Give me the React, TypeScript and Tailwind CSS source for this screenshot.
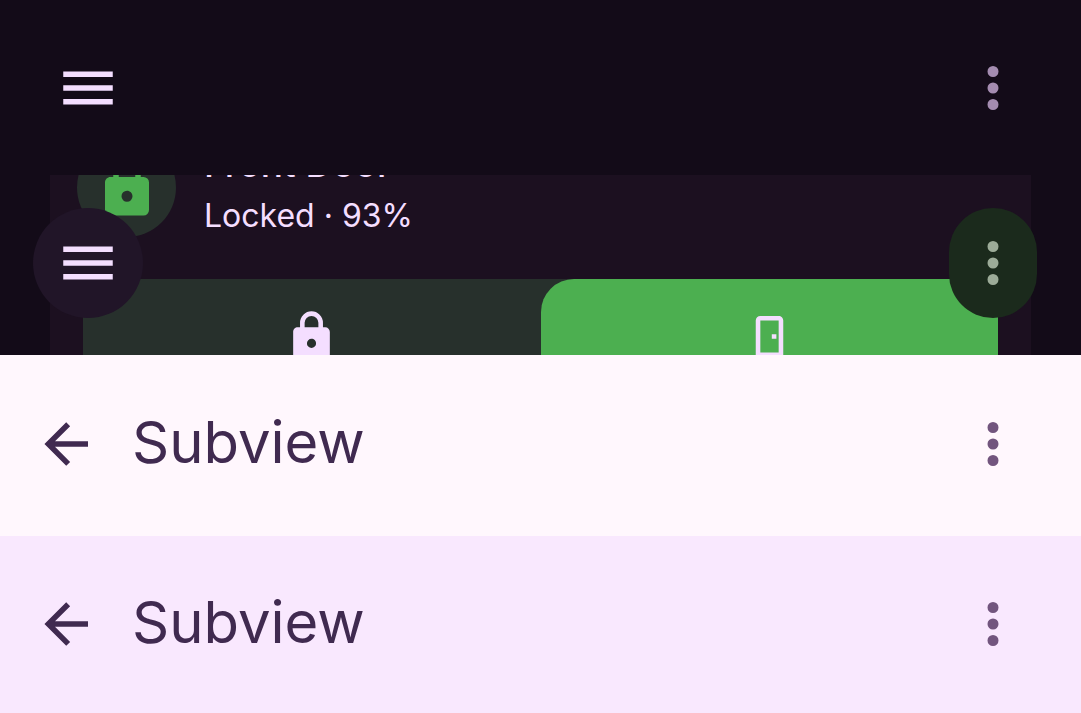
import type { ReactNode } from "react";

const icons = {
  menu: "M3,6H21V8H3V6M3,11H21V13H3V11M3,16H21V18H3V16Z",
  dots: "M12,16A2,2 0 0,1 14,18A2,2 0 0,1 12,20A2,2 0 0,1 10,18A2,2 0 0,1 12,16M12,10A2,2 0 0,1 14,12A2,2 0 0,1 12,14A2,2 0 0,1 10,12A2,2 0 0,1 12,10M12,4A2,2 0 0,1 14,6A2,2 0 0,1 12,8A2,2 0 0,1 10,6A2,2 0 0,1 12,4Z",
  arrow: "M20,11V13H8L13.5,18.5L12.08,19.92L4.16,12L12.08,4.08L13.5,5.5L8,11H20Z",
  lock: "M12,17A2,2 0 0,0 14,15C14,13.89 13.1,13 12,13A2,2 0 0,0 10,15A2,2 0 0,0 12,17M18,8A2,2 0 0,1 20,10V20A2,2 0 0,1 18,22H6A2,2 0 0,1 4,20V10C4,8.89 4.9,8 6,8H7V6A5,5 0 0,1 12,1A5,5 0 0,1 17,6V8H18M12,3A3,3 0 0,0 9,6V8H15V6A3,3 0 0,0 12,3Z",
  door: "M8,3C6.89,3 6,3.89 6,5V21H18V5C18,3.89 17.11,3 16,3H8M8,5H16V19H8V5M13,11V13H15V11H13Z",
};

function Icon({ name, className }: { name: keyof typeof icons; className: string }) {
  return (
    <svg viewBox="0 0 24 24" fill="currentColor" fillRule="evenodd" aria-hidden="true" className={className}>
      <path d={icons[name]} />
    </svg>
  );
}

function IconButton({ label, className = "", children }: { label: string; className?: string; children: ReactNode }) {
  return (
    <button type="button" aria-label={label} className={`flex shrink-0 items-center justify-center ${className}`}>
      {children}
    </button>
  );
}

function SubviewBar({ className }: { className: string }) {
  return (
    <header className={`flex items-center pr-[55px] pl-[33px] text-[#402a50] ${className}`}>
      <IconButton label="Back">
        <Icon name="arrow" className="size-[66px]" />
      </IconButton>
      <h1 className="ml-[33px] flex-1 pb-1 text-[58px] leading-[72px]">Subview</h1>
      <IconButton label="More options" className="text-[#72557e]">
        <Icon name="dots" className="size-[66px]" />
      </IconButton>
    </header>
  );
}

export default function App() {
  return (
    <div className="flex min-h-screen flex-col bg-[#130b18] font-['Inter',sans-serif]">
      <header className="flex h-[175px] shrink-0 items-center justify-between px-[55px] text-[#f4deff]">
        <IconButton label="Menu">
          <Icon name="menu" className="size-[66px]" />
        </IconButton>
        <IconButton label="More options" className="text-[#a48cb0]">
          <Icon name="dots" className="size-[66px]" />
        </IconButton>
      </header>

      <section className="relative h-[180px] shrink-0 overflow-hidden px-[50px]">
        <article className="-mt-16 bg-[#1c1020] px-[33px] pt-[27px] text-[#f4deff]">
          <div className="-ml-[6px] flex h-[99px] items-center gap-7">
            <div className="flex size-[99px] items-center justify-center rounded-full bg-[#27302c] text-[#4caf50]">
              <Icon name="lock" className="size-[66px]" />
            </div>
            <div className="pt-0.5">
              <h2 className="text-[37px] leading-[54px] font-medium">Front Door</h2>
              <p className="text-[32px] leading-[50px]">Locked · 93%</p>
            </div>
          </div>
          <div className="mt-[42px] grid grid-cols-2 rounded-[33px] bg-[#27302c]">
            <IconButton label="Lock" className="py-[30px]">
              <Icon name="lock" className="size-[55px]" />
            </IconButton>
            <IconButton label="Open door" className="rounded-[33px] bg-[#4caf50] py-[30px]">
              <Icon name="door" className="size-[55px]" />
            </IconButton>
          </div>
        </article>
        <IconButton label="Menu" className="absolute top-[33px] left-[33px] size-[110px] rounded-full bg-[#211528] text-[#f4deff]">
          <Icon name="menu" className="size-[66px]" />
        </IconButton>
        <IconButton label="More options" className="absolute top-[33px] right-11 h-[110px] w-[88px] rounded-full bg-[#1b2a1c] text-[#9cab98]">
          <Icon name="dots" className="size-[66px]" />
        </IconButton>
      </section>

      <SubviewBar className="h-[181px] shrink-0 bg-[#fff7fd] pb-1" />
      <SubviewBar className="flex-1 bg-[#f9e8fe] pb-0.5" />
    </div>
  );
}
